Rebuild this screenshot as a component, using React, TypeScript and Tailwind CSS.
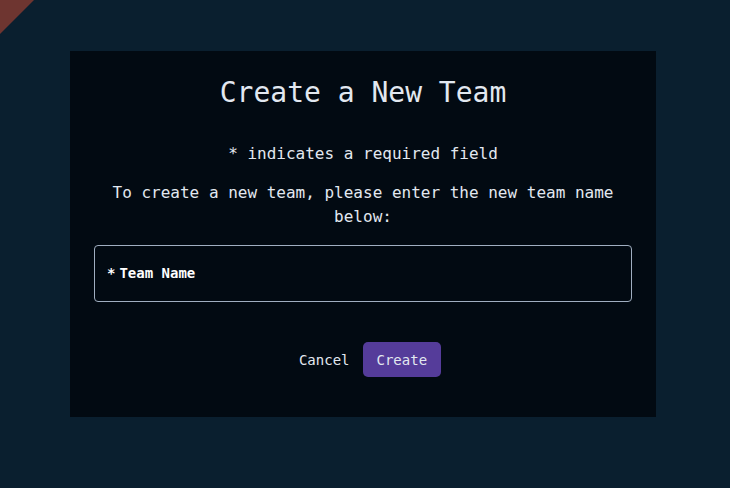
import React from "react";

export default function App() {
  return (
    <div
      className="relative w-[730px] h-[488px] overflow-hidden bg-[#0a1f2f] text-[#e2e8f0]"
      style={{ fontFamily: '"DejaVu Sans Mono", "Liberation Mono", monospace' }}
    >
      <div className="absolute left-0 top-0 w-[34px] h-[34px] bg-[#6e3530] [clip-path:polygon(0_0,100%_0,0_100%)]" />
      <div className="relative ml-[70px] pt-[51px] w-[586px]">
        <div className="bg-[#020a12] px-6 pt-6 pb-10 flex flex-col items-center">
          <h1 className="text-[28px] leading-[36px] text-[#e2e8f0]">Create a New Team</h1>
          <p className="mt-[31px] text-[16px] leading-[24px]">* indicates a required field</p>
          <p className="mt-[15px] text-[16px] leading-[24px] text-center">
            To create a new team, please enter the new team name below:
          </p>
          <div className="mt-4 w-full h-[57px] border border-[#a0aec0] rounded-[4px] flex items-center px-3">
            <span className="text-[14px] font-bold text-white">*</span>
            <span className="ml-[4px] text-[14px] font-bold text-white">Team Name</span>
          </div>
          <div className="mt-10 ml-[14px] flex items-center gap-[13px]">
            <button className="text-[14px] text-[#e2e8f0] px-0 h-[35px] pt-[2px]">Cancel</button>
            <button className="h-[35px] px-[14px] pt-[2px] rounded-[5px] bg-[#553c9a] text-[14px] text-[#e2e8f0]">
              Create
            </button>
          </div>
        </div>
      </div>
    </div>
  );
}
